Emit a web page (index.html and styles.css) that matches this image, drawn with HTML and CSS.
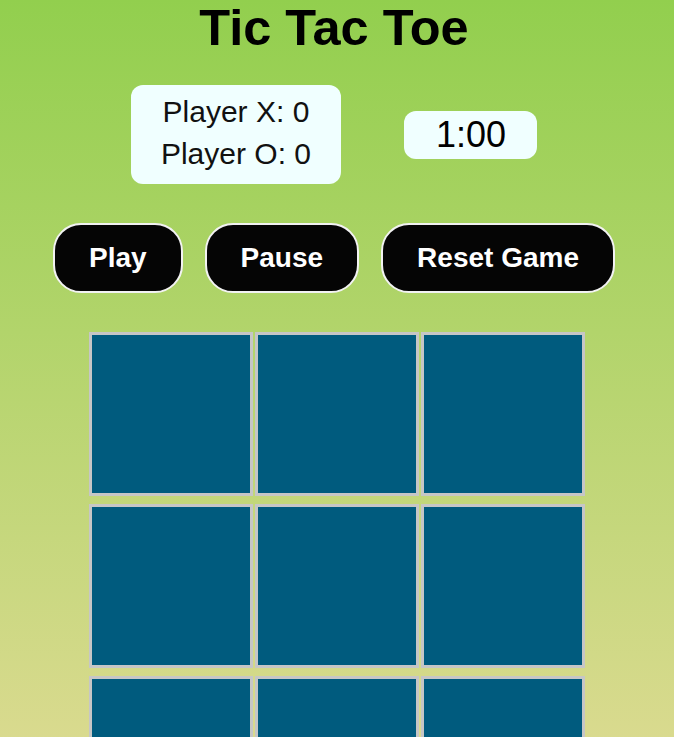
FILE: index.html
```html
<!DOCTYPE html>
<html lang="en">
<head>
<meta charset="utf-8">
<title>Tic Tac Toe</title>
<link rel="stylesheet" href="styles.css">
</head>
<body>
<main class="game">
  <h1 class="title">Tic Tac Toe</h1>
  <section class="status">
    <div class="scores">
      <div class="score">Player X: <span>0</span></div>
      <div class="score">Player O: <span>0</span></div>
    </div>
    <div class="timer">1:00</div>
  </section>
  <section class="controls">
    <button class="btn">Play</button>
    <button class="btn">Pause</button>
    <button class="btn">Reset Game</button>
  </section>
  <section class="board">
    <div class="cell"></div>
    <div class="cell"></div>
    <div class="cell"></div>
    <div class="cell"></div>
    <div class="cell"></div>
    <div class="cell"></div>
    <div class="cell"></div>
    <div class="cell"></div>
    <div class="cell"></div>
  </section>
</main>
</body>
</html>
```

FILE: styles.css
```css
html {
  background: #92cf4f;
}

body {
  margin: 0;
  padding: 0 6px 20px 0;
  font-family: "Liberation Sans", Arial, sans-serif;
  background: linear-gradient(to bottom, #92cf4e, #e5dc99);
  min-height: 100vh;
}

.game {
  display: flex;
  flex-direction: column;
  align-items: center;
}

.title {
  margin: 0;
  font-size: 50.5px;
  font-weight: bold;
  color: #000;
  line-height: 55px;
}

.status {
  display: flex;
  align-items: center;
  gap: 63px;
  margin-top: 30px;
}

.scores {
  background: #f0ffff;
  border-radius: 12px;
  padding: 10px 30px 13px;
  display: flex;
  flex-direction: column;
  gap: 7px;
  align-items: center;
}

.score {
  font-size: 30px;
  line-height: 34.5px;
  color: #111;
}

.timer {
  background: #f0ffff;
  border-radius: 12px;
  font-size: 36px;
  line-height: 41px;
  padding: 3px 31px 4px 32px;
  color: #000;
}

.controls {
  display: flex;
  gap: 22px;
  margin-top: 39px;
}

.btn {
  font-family: "Liberation Sans", Arial, sans-serif;
  font-size: 28px;
  font-weight: bold;
  color: #fff;
  background: #050505;
  border: 2px solid #f2f2f2;
  border-radius: 28px;
  padding: 17px 34px;
  line-height: 32px;
}

.board {
  display: grid;
  grid-template-columns: repeat(3, 164px);
  grid-auto-rows: 164px;
  column-gap: 2px;
  row-gap: 8px;
  margin-top: 39px;
  margin-left: 6px;
}

.cell {
  background: #005b7e;
  border: 3px solid #c6c6c6;
}
```
